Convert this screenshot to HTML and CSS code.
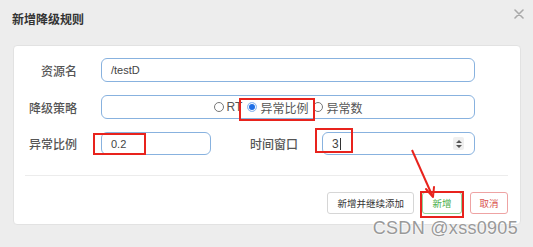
FILE: index.html
```html
<!DOCTYPE html>
<html lang="zh-CN">
<head>
    <meta charset="UTF-8">
    <meta name="viewport" content="width=device-width, initial-scale=1.0">
    <title>新增降级规则</title>
    <link rel="stylesheet" href="styles.css">
</head>
<body>

    <div class="dialog">
        <div class="dialog-header">
            <span class="dialog-title">新增降级规则</span>
            <svg class="close" width="10" height="10" viewBox="0 0 10 10">
                <path d="M1 1 L9 9 M9 1 L1 9" stroke="#a9a9a9" stroke-width="1.6" stroke-linecap="round"/>
            </svg>
        </div>

        <div class="panel">
            <div class="form">
                <label class="label">资源名</label>
                <div class="input wide">/testD</div>

                <label class="label">降级策略</label>
                <div class="input wide radios">
                    <span class="radio"><i class="dot"></i>RT</span>
                    <span class="radio checked"><i class="dot"></i>异常比例</span>
                    <span class="radio"><i class="dot"></i>异常数</span>
                </div>

                <label class="label">异常比例</label>
                <div class="input">0.2</div>
                <label class="label">时间窗口</label>
                <div class="input number">
                    <span>3<i class="caret"></i></span>
                    <span class="spinner">
                        <svg width="8" height="10" viewBox="0 0 8 10">
                            <path d="M4 1 L7 4 L1 4 Z M4 9 L7 6 L1 6 Z" fill="#555"/>
                        </svg>
                    </span>
                </div>
            </div>

            <div class="divider"></div>

            <div class="actions">
                <button class="btn">新增并继续添加</button>
                <button class="btn btn-ok">新增</button>
                <button class="btn btn-cancel">取消</button>
            </div>
        </div>
    </div>

    <!-- annotations drawn on top of the screenshot -->
    <div class="mark mark-radio"></div>
    <div class="mark mark-ratio"></div>
    <div class="mark mark-window"></div>
    <div class="mark mark-ok"></div>
    <svg class="arrow" width="533" height="247" viewBox="0 0 533 247">
        <path d="M412 150 L432 195" stroke="#e8231d" stroke-width="2" fill="none"/>
        <path d="M433 197 L426 189 M433 197 L434 187" stroke="#e8231d" stroke-width="2" fill="none" stroke-linecap="round"/>
    </svg>

    <div class="watermark">CSDN @xss0905</div>

</body>
</html>
```

FILE: styles.css
```css
body {
    font-family: 'Liberation Sans', 'Noto Sans CJK SC', sans-serif;
    margin: 0;
    width: 533px;
    height: 247px;
    background-color: #ededed;
    overflow: hidden;
    position: relative;
}
.dialog {
    padding: 0 12px 0 13px;
}
.dialog-header {
    height: 45px;
    display: flex;
    justify-content: space-between;
    align-items: flex-start;
}
.dialog-title {
    margin: 13px 0 0 -1px;
    font-size: 12px;
    line-height: 14px;
    font-weight: bold;
    color: #333;
}
.close {
    margin: 9px -3px 0 0;
}
.panel {
    height: 180px;
    background-color: #fff;
    border: 1px solid #e2e2e2;
    border-radius: 4px;
    box-sizing: border-box;
    padding-top: 12px;
}
.form {
    display: grid;
    grid-template-columns: 64px 110px 63px 153px;
    grid-template-rows: 24px 24px 23px;
    gap: 13px 24px;
    margin-left: -1px;
}
.label {
    font-size: 12px;
    color: #555;
    font-weight: 500;
    text-align: right;
    align-self: center;
}
.input {
    border: 1px solid #88b2df;
    border-radius: 6px;
    font-size: 11px;
    color: #444;
    padding: 0 9px;
    display: flex;
    align-items: center;
}
.input.wide {
    grid-column: span 3;
}
.radios {
    justify-content: center;
    gap: 5px;
    font-size: 12px;
    color: #555;
}
.radio {
    display: flex;
    align-items: center;
    gap: 3px;
}
.dot {
    width: 8px;
    height: 8px;
    border: 1px solid #777;
    border-radius: 50%;
    background-color: #fff;
}
.radio.checked .dot {
    border-color: #9cc3f3;
    background-color: #1f6fe6;
    box-shadow: inset 0 0 0 1px #fff;
}
.number {
    justify-content: space-between;
    padding-right: 10px;
    font-size: 12px;
}
.caret {
    display: inline-block;
    width: 1px;
    height: 12px;
    margin-left: 1px;
    background-color: #333;
    vertical-align: -2px;
}
.spinner {
    width: 11px;
    height: 13px;
    background-color: #efefef;
    border-radius: 2px;
    display: flex;
    align-items: center;
    justify-content: center;
}
.divider {
    height: 1px;
    background-color: #ececec;
    margin: 20px 12px 0 11px;
}
.actions {
    display: flex;
    justify-content: flex-end;
    gap: 8px;
    margin: 16px 12px 0 0;
}
.btn {
    font-family: inherit;
    font-size: 9.5px;
    height: 22px;
    padding: 0 9px;
    background-color: #fff;
    border: 1px solid #d6d6d6;
    border-radius: 3px;
    color: #333;
    white-space: nowrap;
}
.btn-ok {
    width: 40px;
    padding: 0;
    border-color: #8fcf96;
    color: #4cae4c;
}
.btn-cancel {
    width: 38px;
    padding: 0;
    border-color: #eea3a3;
    color: #d9534f;
}
.mark {
    position: absolute;
    border: 2px solid #e8231d;
    box-sizing: border-box;
}
.mark-radio {
    left: 239px;
    top: 98px;
    width: 76px;
    height: 23px;
}
.mark-ratio {
    left: 93px;
    top: 133px;
    width: 53px;
    height: 22px;
}
.mark-window {
    left: 315px;
    top: 128px;
    width: 38px;
    height: 25px;
}
.mark-ok {
    left: 420px;
    top: 191px;
    width: 44px;
    height: 27px;
}
.arrow {
    position: absolute;
    left: 0;
    top: 0;
}
.watermark {
    position: absolute;
    right: 15px;
    bottom: 8px;
    font-size: 18px;
    color: #999;
    letter-spacing: 0.3px;
    text-shadow: 0 0 2px #fff, 0 0 2px #fff;
}
```
